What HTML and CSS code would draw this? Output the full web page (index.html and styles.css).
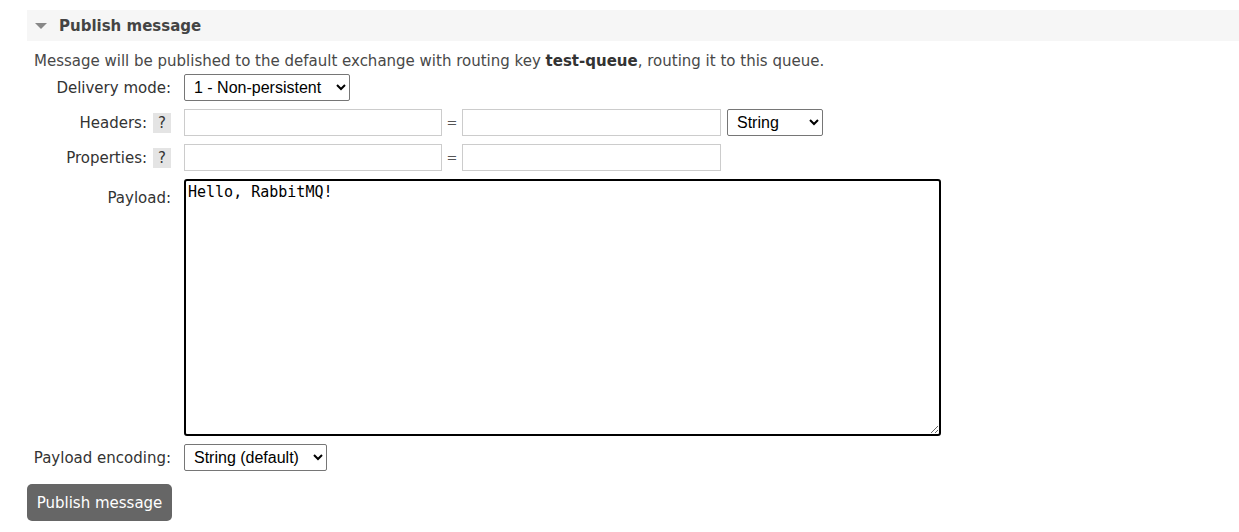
FILE: index.html
```html
<!DOCTYPE html>
<html>
<head>
<meta charset="utf-8">
<link rel="stylesheet" href="styles.css">
</head>
<body>
<div class="page">
  <div class="section-head">
    <span class="tri"></span>
    <h2>Publish message</h2>
  </div>
  <div class="section-body">
    <p class="desc">Message will be published to the default exchange with routing key <b>test-queue</b>, routing it to this queue.</p>
    <div class="form">
      <div class="label">Delivery mode:</div>
      <div class="ctrl">
        <select class="sel sel-mode"><option>1 - Non-persistent</option></select>
      </div>

      <div class="label">Headers: <span class="help">?</span></div>
      <div class="ctrl kv">
        <input class="txt key" type="text">
        <span class="eq">=</span>
        <input class="txt val" type="text">
        <select class="sel sel-type"><option>String</option></select>
      </div>

      <div class="label">Properties: <span class="help">?</span></div>
      <div class="ctrl kv">
        <input class="txt key" type="text">
        <span class="eq">=</span>
        <input class="txt val" type="text">
      </div>

      <div class="label label-top">Payload:</div>
      <div class="ctrl">
        <textarea class="payload">Hello, RabbitMQ!</textarea>
      </div>

      <div class="label">Payload encoding:</div>
      <div class="ctrl">
        <select class="sel sel-enc"><option>String (default)</option></select>
      </div>
    </div>
    <button class="btn">Publish message</button>
  </div>
</div>
</body>
</html>
```

FILE: styles.css
```css
html, body {
  margin: 0;
  padding: 0;
  background: #fff;
}
body {
  font-family: "DejaVu Sans", Verdana, sans-serif;
  font-size: 15px;
  color: #333;
}
.page {
  padding: 10px 0 0 27px;
}
.section-head {
  display: flex;
  align-items: center;
  height: 31px;
  background: #f6f6f6;
  padding-left: 8px;
}
.tri {
  width: 0;
  height: 0;
  border-left: 6px solid transparent;
  border-right: 6px solid transparent;
  border-top: 6px solid #888;
  margin-right: 12px;
  margin-top: 1px;
}
.section-head h2 {
  margin: 0;
  font-size: 15px;
  font-weight: bold;
  color: #444;
}
.section-body {
  padding: 0 0 0 7px;
}
.desc {
  margin: 11px 0 0;
  line-height: 18px;
  color: #484848;
}
.desc b {
  color: #333;
}
.form {
  display: grid;
  grid-template-columns: 137px auto;
  column-gap: 13px;
  row-gap: 8px;
  margin-top: 4px;
  align-items: center;
}
.label {
  text-align: right;
  white-space: nowrap;
  color: #333;
  display: flex;
  justify-content: flex-end;
  align-items: center;
  gap: 6px;
}
.label-top {
  align-self: start;
  padding-top: 10px;
}
.help {
  display: inline-block;
  width: 18px;
  height: 20px;
  line-height: 20px;
  text-align: center;
  background: #e4e4e4;
  color: #333;
  margin-top: 1px;
}
.ctrl {
  display: flex;
  align-items: center;
}
.sel {
  font-family: "Liberation Sans", Arial, sans-serif;
  font-size: 16px;
  color: #000;
  background: #fff;
  border: 1px solid #767676;
  border-radius: 2px;
  height: 27px;
  padding: 0 4px 0 5px;
  margin: 0;
}
.sel-mode { width: 166px; }
.sel-type { width: 96px; margin-left: 6px; }
.sel-enc { width: 143px; }
.txt {
  height: 27px;
  box-sizing: border-box;
  border: 1px solid #ccc;
  margin: 0;
  padding: 2px 4px;
  font-size: 13px;
}
.key { width: 258px; }
.val { width: 259px; }
.eq {
  width: 20px;
  text-align: center;
  color: #555;
  font-size: 13px;
}
.payload {
  width: 757px;
  height: 257px;
  box-sizing: border-box;
  border: 2px solid #000;
  border-radius: 3px;
  font-family: "DejaVu Sans Mono", Consolas, monospace;
  font-size: 15px;
  line-height: 17px;
  padding: 3px 2px;
  margin: 0;
  color: #000;
  resize: both;
  outline: none;
}
.btn {
  display: block;
  margin: 13px 0 0 -7px;
  width: 145px;
  height: 37px;
  background: #666;
  color: #fff;
  border: none;
  border-radius: 5px;
  font-family: "DejaVu Sans", Verdana, sans-serif;
  font-size: 15px;
  padding: 0;
}
```
